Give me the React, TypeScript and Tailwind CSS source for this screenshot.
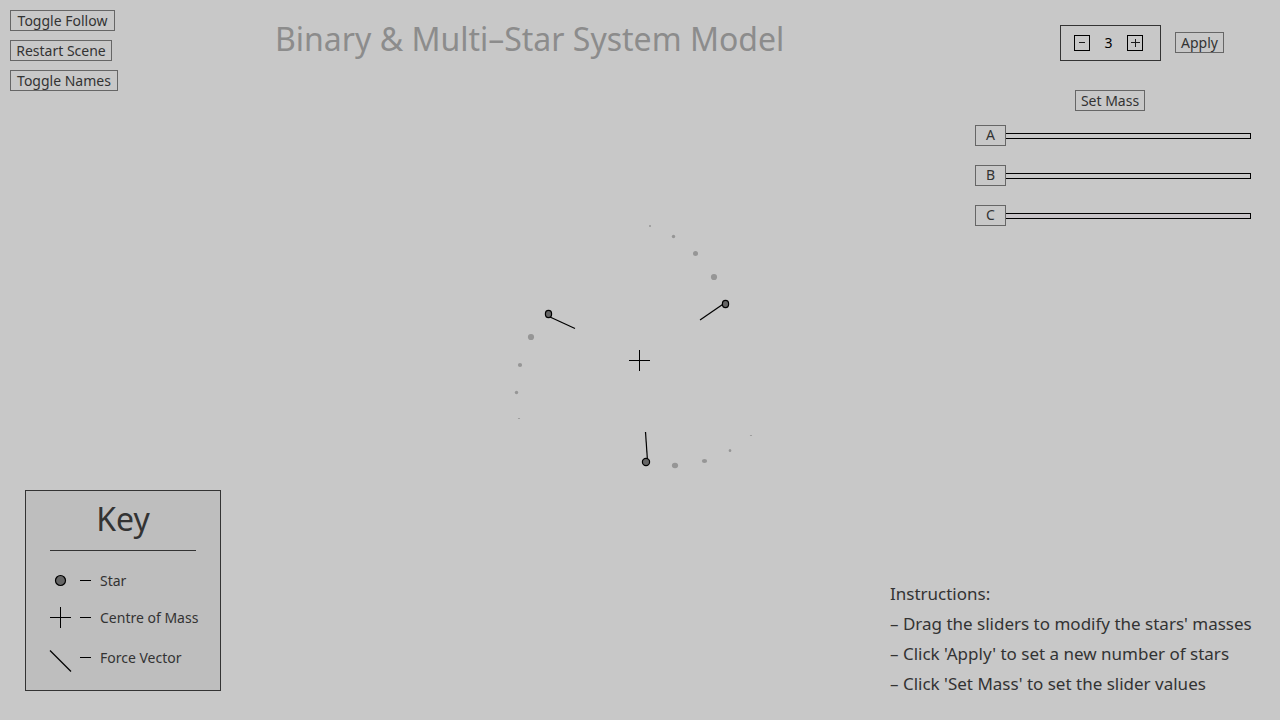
import { useState } from "react";
import type { ReactNode } from "react";

type Point = { x: number; y: number };
type Star = Point & { rx: number; ry: number; force: [Point, Point] };
type Trail = Point & { rx: number; ry: number };

const STARS: Star[] = [
  { x: 548.5, y: 314, rx: 3.1, ry: 3.6, force: [{ x: 550, y: 317 }, { x: 575, y: 328.5 }] },
  { x: 725.5, y: 304, rx: 3.1, ry: 3.6, force: [{ x: 724, y: 303.5 }, { x: 700, y: 320 }] },
  { x: 646, y: 462, rx: 3.6, ry: 3.6, force: [{ x: 647.5, y: 461 }, { x: 645.5, y: 432 }] },
];

const TRAILS: Trail[] = [
  { x: 650, y: 226, rx: 1, ry: 1 },
  { x: 673.5, y: 236.5, rx: 1.7, ry: 1.7 },
  { x: 695.5, y: 253.5, rx: 2.5, ry: 2.5 },
  { x: 714, y: 277, rx: 3.1, ry: 3.1 },
  { x: 531, y: 337, rx: 3.1, ry: 3.1 },
  { x: 520, y: 365, rx: 2.1, ry: 2.1 },
  { x: 516.5, y: 392.5, rx: 1.7, ry: 1.7 },
  { x: 519, y: 418.5, rx: 1.1, ry: 0.6 },
  { x: 675, y: 465.5, rx: 3.1, ry: 2.7 },
  { x: 704.5, y: 461, rx: 2.6, ry: 2.1 },
  { x: 730, y: 450.5, rx: 1.3, ry: 1.6 },
  { x: 751, y: 435.5, rx: 1.1, ry: 0.6 },
];

const INSTRUCTIONS = [
  "– Drag the sliders to modify the stars' masses",
  "– Click 'Apply' to set a new number of stars",
  "– Click 'Set Mass' to set the slider values",
];

function SimButton({ label, width }: { label: string; width: string }) {
  return (
    <button
      type="button"
      className={`flex h-[21px] items-center justify-center whitespace-nowrap border border-[#666666] text-sm text-[#333333] ${width}`}
    >
      {label}
    </button>
  );
}

function StepButton({ label, plus, onClick }: { label: string; plus?: boolean; onClick: () => void }) {
  return (
    <button
      type="button"
      aria-label={label}
      onClick={onClick}
      className="flex size-4 items-center justify-center border border-black"
    >
      <svg width="14" height="14" viewBox="0 0 14 14" stroke="#1a1a1a" shapeRendering="crispEdges">
        {plus ? <path d="M3 6.5h9M7.5 3v8" /> : <path d="M4 6.5h6" />}
      </svg>
    </button>
  );
}

function MassSlider({ name, track }: { name: string; track: string }) {
  const [mass, setMass] = useState(0);
  return (
    <div className="relative h-[22px]">
      <input
        id={`mass-${name}`}
        type="range"
        min={0}
        max={100}
        value={mass}
        onChange={(e) => setMass(Number(e.target.value))}
        className={`block h-[22px] w-full appearance-none bg-transparent [&::-webkit-slider-runnable-track]:h-[6px] [&::-webkit-slider-runnable-track]:border [&::-webkit-slider-runnable-track]:border-l-0 [&::-webkit-slider-runnable-track]:border-black [&::-webkit-slider-thumb]:mt-[-9px] [&::-webkit-slider-thumb]:h-[21px] [&::-webkit-slider-thumb]:w-[31px] [&::-webkit-slider-thumb]:appearance-none [&::-webkit-slider-thumb]:border [&::-webkit-slider-thumb]:border-[#666666] [&::-webkit-slider-thumb]:bg-[#c8c8c8] ${track}`}
      />
      <label
        htmlFor={`mass-${name}`}
        className="pointer-events-none absolute top-0 flex h-5 w-[31px] items-center justify-center text-sm text-[#333333]"
        style={{ left: `calc((100% - 31px) * ${mass / 100})` }}
      >
        {name}
      </label>
    </div>
  );
}

function OrbitView() {
  return (
    <div className="pointer-events-none absolute inset-0 flex items-center justify-center">
      <svg width="280" height="300" viewBox="500 210 280 300" aria-label="Star orbits">
        {TRAILS.map((t) => (
          <ellipse key={`${t.x}-${t.y}`} cx={t.x} cy={t.y} rx={t.rx} ry={t.ry} fill="#969696" />
        ))}
        {STARS.map((s) => (
          <g key={s.x} stroke="#000000" strokeWidth="1.2">
            <line x1={s.force[0].x} y1={s.force[0].y} x2={s.force[1].x} y2={s.force[1].y} />
            <ellipse cx={s.x} cy={s.y} rx={s.rx} ry={s.ry} fill="#666666" />
          </g>
        ))}
        <path d="M629 360.5h21M639.5 350v21" stroke="#000000" shapeRendering="crispEdges" />
      </svg>
    </div>
  );
}

function KeyRow({ label, children }: { label: string; children: ReactNode }) {
  return (
    <li className="flex h-[21px] items-center">
      <svg className="overflow-visible" width="41" height="21" viewBox="0 0 41 21" fill="none" stroke="#000000">
        {children}
        <path d="M30 10.5h11" shapeRendering="crispEdges" />
      </svg>
      <span className="ml-[9px] whitespace-nowrap text-sm text-[#333333]">{label}</span>
    </li>
  );
}

function KeyPanel() {
  return (
    <section className="h-[201px] w-[196px] border border-[#333333] bg-[#bebebe] px-6">
      <h2 className="flex h-[59px] items-center justify-center pb-1 text-[32px] leading-none text-[#333333]">Key</h2>
      <hr className="border-[#333333]" />
      <ul className="pt-[19px]">
        <KeyRow label="Star">
          <circle cx="10.5" cy="10.5" r="5" fill="#666666" strokeWidth="1.2" />
        </KeyRow>
        <li className="h-4" aria-hidden="true" />
        <KeyRow label="Centre of Mass">
          <path d="M0 10.5h21M10.5 0v21" shapeRendering="crispEdges" />
        </KeyRow>
        <li className="h-[19px]" aria-hidden="true" />
        <KeyRow label="Force Vector">
          <path d="M0 3.5l21 21" strokeWidth="1.2" />
        </KeyRow>
      </ul>
    </section>
  );
}

export default function App() {
  const [count, setCount] = useState(3);

  return (
    <main className="relative flex min-h-screen flex-col justify-between bg-[#c8c8c8] font-['Noto_Sans',sans-serif]">
      <OrbitView />

      <header className="relative flex items-start pl-[10px] pr-[29px]">
        <nav className="flex w-[265px] flex-col gap-[9px] pt-[10px]">
          <SimButton label="Toggle Follow" width="w-[105px]" />
          <SimButton label="Restart Scene" width="w-[102px]" />
          <SimButton label="Toggle Names" width="w-[108px]" />
        </nav>

        <h1 className="whitespace-nowrap pt-[18px] text-[32px] leading-[42px] text-[#8c8c8c]">
          Binary &amp; Multi–Star System Model
        </h1>

        <div className="ml-auto flex w-[276px] flex-col pt-[25px]">
          <div className="ml-[85px] flex gap-[14px]">
            <div className="flex h-9 w-[101px] items-center border border-[#333333] pl-[13px]">
              <StepButton label="Fewer stars" onClick={() => setCount(Math.max(2, count - 1))} />
              <output className="w-[37px] text-center text-sm text-black">{count}</output>
              <StepButton label="More stars" plus onClick={() => setCount(Math.min(9, count + 1))} />
            </div>
            <div className="pt-[7px]">
              <SimButton label="Apply" width="w-[49px]" />
            </div>
          </div>

          <div className="ml-[100px] mt-[29px]">
            <SimButton label="Set Mass" width="w-[70px]" />
          </div>

          <div className="mt-[14px] flex flex-col gap-[18px]">
            <MassSlider name="A" track="" />
            <MassSlider name="B" track="" />
            <MassSlider name="C" track="[&::-webkit-slider-runnable-track]:bg-[#c8c4c8]" />
          </div>
        </div>
      </header>

      <footer className="relative flex items-end justify-between pb-[29px] pl-[25px]">
        <KeyPanel />
        <section className="-mb-2 w-[390px] text-[17px] leading-[30px] text-[#333333]">
          <h2>Instructions:</h2>
          <ul>
            {INSTRUCTIONS.map((line) => (
              <li key={line} className="whitespace-nowrap">
                {line}
              </li>
            ))}
          </ul>
        </section>
      </footer>
    </main>
  );
}
